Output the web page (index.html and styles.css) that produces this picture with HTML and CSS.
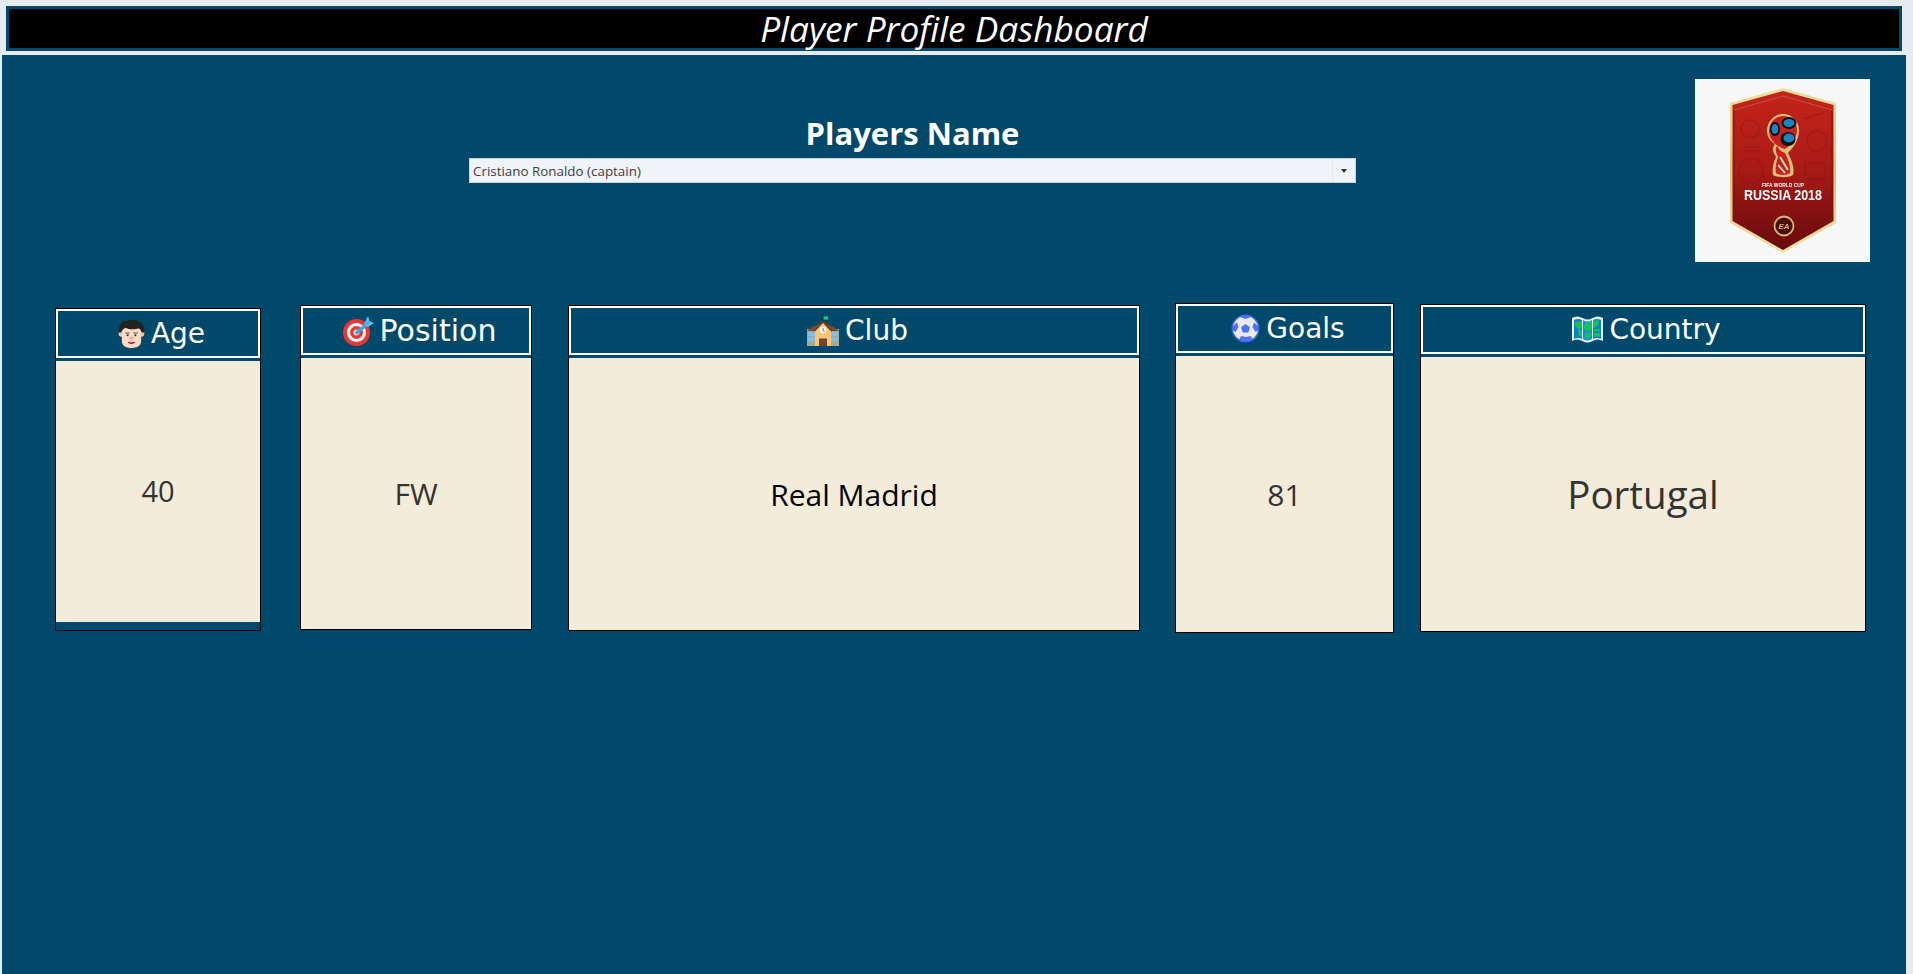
FILE: index.html
```html
<!DOCTYPE html>
<html lang="en">
<head>
<meta charset="utf-8">
<title>Player Profile Dashboard</title>
<link rel="stylesheet" href="styles.css">
</head>
<body>
<header class="title-bar"><h1 class="title">Player Profile Dashboard</h1></header>
<main class="panel">
  <section class="top-row">
    <div class="filter">
      <div class="filter-label">Players Name</div>
      <div class="dropdown">
        <span class="dropdown-text">Cristiano Ronaldo (captain)</span>
        <span class="dropdown-btn"><span class="caret"></span></span>
      </div>
    </div>
    <div class="logo">
      <svg class="logo-svg" width="175" height="183" viewBox="0 0 175 183">
        <defs>
          <linearGradient id="red" x1="0" y1="0" x2="0" y2="1">
            <stop offset="0" stop-color="#c5241a"/>
            <stop offset="0.5" stop-color="#a81a16"/>
            <stop offset="1" stop-color="#650a0c"/>
          </linearGradient>
          <linearGradient id="gold" x1="0" y1="0" x2="0" y2="1">
            <stop offset="0" stop-color="#f0de9e"/>
            <stop offset="0.5" stop-color="#dcc37c"/>
            <stop offset="1" stop-color="#f1e2a8"/>
          </linearGradient>
        </defs>
        <polygon points="88,9 141,24 141,144 88,174 35,144 35,24" fill="url(#gold)"/>
        <polygon points="88,12 138.5,26 138.5,142 88,171 37.5,142 37.5,26" fill="url(#red)"/>
        <polyline points="39,31 88,17 137,31 137,139 88,167 39,139 39,31" fill="none" stroke="#7c1210" stroke-width="0.8"/>
        <polyline points="39,31 88,17 137,31" fill="none" stroke="#e2736a" stroke-width="0.7"/>
        <g fill="none" stroke="#8f1512" stroke-width="1.2" opacity="0.6">
          <circle cx="55" cy="50" r="9"/>
          <circle cx="122" cy="62" r="10"/>
          <circle cx="56" cy="92" r="12"/>
          <rect x="110" y="84" width="20" height="16"/>
          <path d="M48 68 H66 M48 72 H66 M108 40 L128 34"/>
        </g>
        <path d="M80 65 C76 70 79 75 81 78 C78 84 77 91 78 96 C82 99 94 99 98 96 C100 88 96 80 93 74 C97 70 104 62 104 51 C104 42 97 35 88 35 C79 35 72 43 72 52 C72 58 76 63 80 65Z" fill="#dcc07a"/>
        <path d="M82 67 C79 71 82 75 83 78 C81 84 80 89 81 94 C84 96.5 92 96.5 95 94 C96 87 93 80 90 74 C85 72 84 70 82 67Z" fill="#c8201b"/>
        <path d="M85 78 L93 91 M83 86 L90 94" stroke="#f7ead0" stroke-width="1.8" fill="none"/>
        <path d="M74 52 C74 43 81 37 88 37 C96 37 102 44 102 51 C102 60 96 66 90 70 C84 69 74 62 74 52Z" fill="#c8201b"/>
        <ellipse cx="94" cy="44" rx="7.5" ry="6" fill="#0a0f18"/>
        <ellipse cx="94" cy="44" rx="5.5" ry="4" fill="#1f83bf"/>
        <ellipse cx="80" cy="50" rx="5" ry="7" fill="#0a0f18"/>
        <ellipse cx="80" cy="50" rx="3.4" ry="5" fill="#1f83bf"/>
        <ellipse cx="93" cy="60" rx="7.5" ry="7" fill="#0a0f18"/>
        <ellipse cx="94" cy="59" rx="5.5" ry="4.4" fill="#1f83bf"/>
        <text class="logo-small" x="88" y="108" text-anchor="middle" textLength="42" lengthAdjust="spacingAndGlyphs">FIFA WORLD CUP</text>
        <text class="logo-big" x="88" y="121" text-anchor="middle" textLength="78" lengthAdjust="spacingAndGlyphs">RUSSIA 2018</text>
        <circle cx="89" cy="147" r="9.5" fill="#4a0d0b" stroke="#d7b96e" stroke-width="1.8"/>
        <text class="logo-ea" x="89" y="150" text-anchor="middle">EA</text>
      </svg>
    </div>
  </section>

  <section class="cards">
    <article class="card card-age">
      <div class="card-head">
        <svg class="icon" width="27" height="30" viewBox="0 0 28 31">
          <ellipse cx="3.5" cy="15" rx="2.8" ry="3.4" fill="#f3c4aa"/>
          <ellipse cx="24.5" cy="15" rx="2.8" ry="3.4" fill="#f3c4aa"/>
          <path d="M4 12 C4 7 9 8 14 8 C19 8 24 7 24 12 V23 C24 28 19 30 14 30 C9 30 4 28 4 23Z" fill="#fad9c5"/>
          <path d="M1 14 C0 6 5 1 10 2 C12 0 19 0 22 3 C26 4 28 9 27 14 L24.5 14 C24 11 22 9 20 10 C16 11 11 11 8 9 C5 10 4 12 3.5 14Z" fill="#222"/>
          <rect x="7.5" y="14" width="4.5" height="1" fill="#5c4a42"/>
          <rect x="16" y="14" width="4.5" height="1" fill="#5c4a42"/>
          <ellipse cx="10" cy="16.8" rx="1.1" ry="1" fill="#3a2c28"/>
          <ellipse cx="18" cy="16.8" rx="1.1" ry="1" fill="#3a2c28"/>
          <ellipse cx="14" cy="20" rx="2.2" ry="1.9" fill="#eeb49a"/>
          <path d="M10.5 24.2 Q14 26.8 17.5 24.2 Q14 25 10.5 24.2Z" fill="#b3132f" stroke="#b3132f" stroke-width="0.8"/>
        </svg>
        <span class="head-text">Age</span>
      </div>
      <div class="card-body value-age">40</div>
    </article>

    <article class="card card-position">
      <div class="card-head">
        <svg class="icon" width="31" height="30" viewBox="0 0 31 30">
          <circle cx="13.5" cy="16.5" r="13.5" fill="#f0342f"/>
          <circle cx="13.5" cy="16.5" r="9.5" fill="#fff"/>
          <circle cx="13.5" cy="16.5" r="6.5" fill="#f0342f"/>
          <circle cx="13.5" cy="16.5" r="3" fill="#d8dee0"/>
          <path d="M13 17.5 L24 8" stroke="#35a6e8" stroke-width="3.6"/>
          <path d="M21 8 L25 0 L26.5 5 L31 7 L25 11Z" fill="#4fc3f7"/>
          <path d="M23 8 L27 5" stroke="#1d8fd6" stroke-width="1"/>
        </svg>
        <span class="head-text head-text-large">Position</span>
      </div>
      <div class="card-body value-position">FW</div>
    </article>

    <article class="card card-club">
      <div class="card-head">
        <svg class="icon" width="32" height="30" viewBox="0 0 32 30">
          <rect x="0" y="13" width="32" height="17" fill="#a8aa90"/>
          <rect x="1" y="16" width="7" height="4" fill="#7fbfee"/>
          <rect x="1" y="21.5" width="7" height="4" fill="#7fbfee"/>
          <rect x="24" y="16" width="7" height="4" fill="#7fbfee"/>
          <rect x="24" y="21.5" width="7" height="4" fill="#7fbfee"/>
          <path d="M0 15 L5 11 L12 8 L20 8 L27 11 L32 15Z" fill="#7a4a34"/>
          <path d="M8 30 V14 L16 5 L24 14 V30Z" fill="#fcc574"/>
          <path d="M6.5 15 L16 4 L25.5 15 L24 15.5 L16 7 L8 15.5Z" fill="#6d3f2b"/>
          <rect x="15.4" y="0" width="1.4" height="6" fill="#4b2b1e"/>
          <rect x="16.6" y="0.5" width="4.6" height="3" fill="#12d28a"/>
          <circle cx="16" cy="14" r="3.2" fill="#fff"/>
          <path d="M16 12 V14.5 L17.5 15.5" stroke="#6d3f2b" stroke-width="0.9" fill="none"/>
          <rect x="12" y="22.5" width="8" height="7.5" fill="#71462f"/>
        </svg>
        <span class="head-text">Club</span>
      </div>
      <div class="card-body value-club">Real Madrid</div>
    </article>

    <article class="card card-goals">
      <div class="card-head">
        <svg class="icon" width="29" height="29" viewBox="0 0 29 29">
          <circle cx="14.5" cy="14.5" r="14" fill="#3f62e8"/>
          <circle cx="14.5" cy="14.5" r="12.5" fill="#e9e9ee"/>
          <polygon points="14.5,10 19,13.2 17.3,18.4 11.7,18.4 10,13.2" fill="#4a74f5"/>
          <path d="M9 3 L14.5 5 L20 3 L17.5 1.5 H11.5Z" fill="#4a74f5"/>
          <path d="M2 12 L6 8.5 L7.5 13 L4.5 18 L2 16.5Z" fill="#4a74f5"/>
          <path d="M27 12 L23 8.5 L21.5 13 L24.5 18 L27 16.5Z" fill="#4a74f5"/>
          <path d="M8 26 L10 22 L15 23 L20 22 L21.5 25.5 L15 27.5Z" fill="#4a74f5"/>
        </svg>
        <span class="head-text">Goals</span>
      </div>
      <div class="card-body value-goals">81</div>
    </article>

    <article class="card card-country">
      <div class="card-head">
        <svg class="icon" width="31" height="27" viewBox="0 0 31 27">
          <path d="M0 2 Q5 -1 10.5 2 Q15.5 5 20.5 2 Q26 -1 31 2 V25 Q26 22 20.5 25 Q15.5 28 10.5 25 Q5 22 0 25Z" fill="#eef4f5"/>
          <path d="M2 4 Q6 2 10 4 V23 Q6 21 2 23Z" fill="#0b7fc8"/>
          <path d="M11 4 Q15.5 7 20 4 V23 Q15.5 26 11 23Z" fill="#1490d8"/>
          <path d="M21 4 Q25 2 29 4 V23 Q25 21 21 23Z" fill="#0b7fc8"/>
          <path d="M3 6 L10 5 L10 11 L7 14 L3 10Z M6 14 L10 14 L10 21 L7 20Z" fill="#0fc45c"/>
          <path d="M12 9 L20 4.5 L20 13 L15 16 L12 12Z M21 5 L27 4 L26 10 L21 12Z M22 13 L28 13 L28 15.5 L22 15.5Z M22 17 L28 17 L28 20.5 L22 20.5Z M13 17 L19 17 L18 23 L13 22Z" fill="#0fc45c"/>
        </svg>
        <span class="head-text">Country</span>
      </div>
      <div class="card-body value-country">Portugal</div>
    </article>
  </section>
</main>
</body>
</html>
```
FILE: styles.css
```css
* { box-sizing: border-box; }
html, body { height: 100%; }
body {
  margin: 0;
  background: #e6ebf0;
  overflow: hidden;
  font-family: "Open Sans", "Noto Sans", sans-serif;
}
.title-bar {
  height: 45px;
  margin: 6px 11px 4px 6px;
  background: #000;
  border: 3px solid #00496a;
  display: flex;
  align-items: center;
  justify-content: center;
}
.title {
  margin: 0;
  color: #fff;
  font-size: 35.2px;
  font-weight: 400;
  font-style: italic;
  line-height: 39px;
}
.panel {
  height: 919px;
  margin: 0 7px 0 2px;
  background: #00496a;
}
.top-row {
  display: flex;
  align-items: flex-start;
  padding: 24px 0 0 467px;
}
.filter { width: 887px; margin-top: 32px; }
.filter-label {
  height: 47px;
  color: #fff;
  font-size: 31px;
  font-weight: 700;
  line-height: 45px;
  text-align: center;
}
.dropdown {
  height: 25px;
  display: flex;
  align-items: stretch;
  background: #f0f3f7;
  border: 1px solid #d0d3d6;
}
.dropdown-text {
  flex: 1;
  padding-left: 3px;
  color: #404040;
  font-size: 13.4px;
  line-height: 25px;
}
.dropdown-btn {
  width: 23px;
  border-left: 1px solid #e6e8eb;
  display: flex;
  align-items: center;
  justify-content: center;
}
.caret {
  width: 0;
  height: 0;
  border-left: 3.5px solid transparent;
  border-right: 3.5px solid transparent;
  border-top: 4px solid #333;
}
.logo {
  width: 175px;
  height: 183px;
  margin-left: 339px;
  background: #f7f7f7;
}
.logo-svg { display: block; filter: blur(0.35px); }
.logo-small { fill: #fff; font: 700 5.5px "Liberation Sans", sans-serif; }
.logo-big { fill: #fff; font: 700 14px "Liberation Sans", sans-serif; }
.logo-ea { fill: #d9b765; font: italic 700 8px "Liberation Sans", sans-serif; }

.cards {
  display: flex;
  align-items: flex-start;
  padding: 41px 0 0 53px;
}
.card {
  display: flex;
  flex-direction: column;
  background: #00496a;
  border: 1px solid #000;
}
.card-age { width: 206px; height: 323px; margin-top: 5px; }
.card-position { width: 232px; height: 325px; margin: 2px 0 0 39px; }
.card-club { width: 572px; height: 326px; margin: 2px 0 0 36px; }
.card-goals { width: 219px; height: 330px; margin: 0 0 0 35px; }
.card-country { width: 446px; height: 328px; margin: 1px 0 0 26px; }
.card-head {
  height: 49px;
  flex: none;
  padding-left: 7px;
  border: 2px solid #fff;
  display: flex;
  align-items: center;
  justify-content: center;
  gap: 6px;
}
.head-text {
  color: #fff;
  font-family: "DejaVu Sans", sans-serif;
  font-size: 28px;
  line-height: 36px;
}
.head-text-large { font-size: 30px; }
.icon { display: block; flex: none; }
.card-body {
  flex: 1;
  margin-top: 3px;
  background: #f4ecda;
  color: #333;
  display: flex;
  align-items: center;
  justify-content: center;
  font-size: 30px;
}
.value-age { margin-bottom: 8px; padding-bottom: 2px; font-size: 29px; }
.value-club { color: #000; }
.value-country { font-size: 38.5px; }
```
